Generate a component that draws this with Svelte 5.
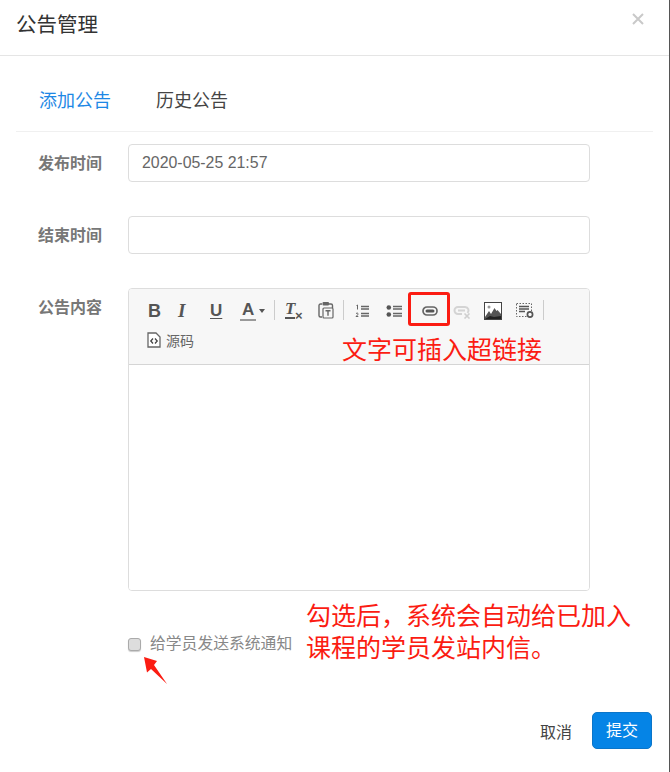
<script>
  let title = '公告管理';
  let tabs = ['添加公告', '历史公告'];
</script>

<div class="modal">
  <header class="head">
    <h4>{title}</h4>
    <svg class="close" width="12" height="12" viewBox="0 0 12 12"><path d="M1 1l10 10M11 1L1 11" stroke="#c9c9c9" stroke-width="2"/></svg>
  </header>

  <div class="body">
    <nav class="tabs">
      {#each tabs as t, i}
        <span class="tab" class:active={i === 0}>{t}</span>
      {/each}
    </nav>

    <div class="row first">
      <span class="label">发布时间</span>
      <div class="input">2020-05-25 21:57</div>
    </div>
    <div class="row second">
      <span class="label">结束时间</span>
      <div class="input"></div>
    </div>
    <div class="row third">
      <span class="label">公告内容</span>
      <div class="editor">
        <div class="toolbar">
          <div class="line one">
            <span class="ic b">B</span>
            <span class="ic i">I</span>
            <span class="ic u">U</span>
            <span class="ic color"><span class="a">A</span><span class="caret"></span></span>
            <span class="sep s1"></span>
            <span class="ic clear"><span class="tx">T</span><span class="x">×</span></span>
            <svg class="ic paste" width="16" height="18" viewBox="0 0 16 18">
              <path d="M4 3H2.500A1.500 1.500 0 0 0 1 4.500v10A1.500 1.500 0 0 0 2.500 16H4" fill="none" stroke="#666" stroke-width="1.400"/>
              <path d="M11 3h2a1.500 1.500 0 0 1 1.500 1.500V7" fill="none" stroke="#666" stroke-width="1.400"/>
              <rect x="4.500" y="1" width="6.500" height="3.500" rx="1" fill="#666"/>
              <rect x="5" y="7" width="10" height="10" rx="1" fill="#f7f7f7" stroke="#666" stroke-width="1.200"/>
              <path d="M7.500 9.800h5M10 9.800v5" stroke="#666" stroke-width="1.400"/>
            </svg>
            <span class="sep s2"></span>
            <svg class="ic ol" width="14" height="14" viewBox="0 0 14 14">
              <path d="M1.500 1.500l1-.5v4.500M1 9.500q1.500-1 2 0t-2 3h2.300" fill="none" stroke="#666" stroke-width="1"/>
              <path d="M6 2.500h8M6 5h8M6 9.500h8M6 12h8" stroke="#666" stroke-width="1.500"/>
            </svg>
            <svg class="ic ul" width="16" height="14" viewBox="0 0 16 14">
              <circle cx="2.800" cy="3.500" r="2.300" fill="#555"/><circle cx="2.800" cy="10.500" r="2.300" fill="#555"/>
              <path d="M7 2.500h9M7 5h9M7 9.500h9M7 12h9" stroke="#666" stroke-width="1.400"/>
            </svg>
            <svg class="ic link" width="16" height="10" viewBox="0 0 16 10">
              <rect x="1" y="1" width="14" height="8" rx="4" fill="none" stroke="#666" stroke-width="1.700"/>
              <rect x="3.500" y="3.500" width="9" height="3" rx="1.500" fill="#555"/>
            </svg>
            <svg class="ic unlink" width="18" height="14" viewBox="0 0 18 14">
              <path d="M9 9H5a3.500 3.500 0 0 1 0-7h7a3.500 3.500 0 0 1 2.500 6" fill="none" stroke="#d4d4d4" stroke-width="2"/>
              <path d="M5 5.500h7" stroke="#d4d4d4" stroke-width="2"/>
              <path d="M11.500 8.500l5 5M16.500 8.500l-5 5" stroke="#cfcfcf" stroke-width="1.600"/>
            </svg>
            <svg class="ic image" width="18" height="18" viewBox="0 0 18 18">
              <rect x=".5" y=".5" width="17" height="17" fill="#fff" stroke="#444"/>
              <path d="M1 15l4-6 2 3 3.500-6 2 3 1-1L17 12v5H1z" fill="#555"/>
              <path d="M1 17l5-3 4 1 7-1v3z" fill="#222"/>
              <circle cx="5" cy="5" r="1.500" fill="#999"/>
            </svg>
            <svg class="ic media" width="19" height="18" viewBox="0 0 19 18">
              <rect x=".5" y="1.500" width="15" height="13" fill="none" stroke="#666" stroke-dasharray="1.500 1.500"/>
              <path d="M3 4.500h10M3 7h10M3 9.500h6" stroke="#555" stroke-width="1.500"/>
              <circle cx="14" cy="12.500" r="2.600" fill="#f7f7f7" stroke="#555" stroke-width="1.700"/>
            </svg>
            <span class="sep s3"></span>
          </div>
          <div class="line two">
            <svg width="14" height="16" viewBox="0 0 14 16">
              <path d="M1 1h8l4 4v10H1z" fill="#fff" stroke="#666" stroke-width="1.300"/>
              <path d="M6 6.500L3.800 9 6 11.500M8 6.500L10.200 9 8 11.500" fill="none" stroke="#444" stroke-width="1.300"/>
            </svg>
            <span class="src">源码</span>
          </div>
        </div>
        <div class="content"></div>
      </div>
    </div>

    <label class="notify">
      <span class="box"></span>
      <span>给学员发送系统通知</span>
    </label>
  </div>

  <footer class="foot">
    <span class="cancel">取消</span>
    <span class="submit">提交</span>
  </footer>

  <!-- red notes drawn over the screenshot -->
  <div class="mark"></div>
  <div class="note n1">文字可插入超链接</div>
  <div class="note n2">勾选后，系统会自动给已加入<br />课程的学员发站内信。</div>
  <svg class="arrow" width="26" height="36" viewBox="0 0 26 36">
    <path d="M1 3l13 4-3 4 13 19L8 15l-4 3.500z" fill="#fb1c12"/>
  </svg>
</div>

<style>
  :global(body) { margin: 0; background: #fff; }

  .modal {
    position: relative;
    width: 670px; height: 772px;
    box-sizing: border-box;
    border-right: 1px solid #555;
    font-family: "Liberation Sans", "Noto Sans CJK SC", sans-serif;
    font-size: 14px; color: #555;
    overflow: hidden;
    display: flex; flex-direction: column;
  }

  .head {
    height: 56px; box-sizing: border-box;
    border-bottom: 1px solid #e5e5e5;
    padding: 0 25px 0 17px;
    display: flex; align-items: center; justify-content: space-between;
    flex: none;
  }
  .head h4 { margin: 0 0 6px -1px; font-size: 20.500px; font-weight: 400; color: #333; line-height: 26px; }
  .close { margin-bottom: 17px; }

  .body { flex: 1; padding: 0 16px; }

  .tabs {
    display: flex; gap: 45px;
    height: 76px; box-sizing: border-box;
    padding: 33px 0 0 23px;
    border-bottom: 1px solid #f0f0f0;
    font-size: 18px; color: #444; line-height: 24px;
  }
  .tab { width: 72px; white-space: nowrap; }
  .tab.active { color: #1e88e5; }

  .row { display: flex; align-items: flex-start; }
  .row.first { margin-top: 12px; }
  .row.second { margin-top: 34px; }
  .row.third { margin-top: 34px; }

  .label {
    width: 112px; height: 38px; flex: none; box-sizing: border-box;
    padding-left: 22px;
    font-size: 16px; font-weight: 700; color: #777; line-height: 40px;
  }

  .input {
    width: 462px; height: 38px; box-sizing: border-box;
    border: 1px solid #ddd; border-radius: 4px;
    padding: 1px 13px 0; line-height: 34px;
    font-size: 15.900px; color: #666;
  }

  .editor {
    width: 462px; height: 303px; box-sizing: border-box;
    border: 1px solid #ddd; border-radius: 4px;
    display: flex; flex-direction: column;
    overflow: hidden;
  }

  .toolbar {
    height: 76px; flex: none; box-sizing: border-box;
    background: #f7f7f7; border-bottom: 1px solid #d5d5d5;
    position: relative;
  }
  .line { position: absolute; left: 0; right: 0; }
  .line.one { top: 1px; height: 44px; }
  .ic { position: absolute; }
  .b, .i, .u {
    font-weight: 700; font-size: 17px; color: #555; line-height: 20px; top: 11px;
  }
  .b { left: 19px; font-size: 18px; }
  .i { left: 49px; font-style: italic; font-family: "Liberation Serif", serif; font-size: 19px; }
  .u { left: 81px; text-decoration: underline; text-underline-offset: 2px; }
  .color { left: 111px; top: 11px; display: flex; align-items: center; gap: 3px; }
  .a { font-weight: 700; font-size: 17px; line-height: 18px; color: #555; border-bottom: 2px solid #999; padding: 0 2px; display: block; height: 18px; }
  .caret { width: 0; height: 0; border: 3.500px solid transparent; border-top: 4px solid #555; border-bottom: 0; }
  .sep { position: absolute; top: 10px; width: 1px; height: 20px; background: #ccc; }
  .s1 { left: 145px; }
  .s2 { left: 214px; }
  .s3 { left: 414px; }
  .clear { left: 156px; top: 11px; }
  .tx { font-family: "Liberation Serif", serif; font-style: italic; font-weight: 700; font-size: 17px; color: #555; line-height: 16px; display: block; border-bottom: 2px solid #555; width: 10px; height: 16px; text-align: center; }
  .x { position: absolute; left: 10px; top: 9px; font-size: 13px; font-weight: 700; line-height: 12px; color: #555; }
  .paste { left: 189px; top: 11px; }
  .ol { left: 226px; top: 14px; }
  .ul { left: 257px; top: 14px; }
  .link { left: 293px; top: 16px; }
  .unlink { left: 324px; top: 15px; }
  .image { left: 355px; top: 12px; }
  .media { left: 387px; top: 12px; }

  .line.two {
    top: 39px; height: 24px; padding-left: 18px;
    display: flex; align-items: center; gap: 5px;
  }
  .src { font-size: 14px; color: #666; }

  .content { flex: 1; background: #fff; }

  .notify {
    display: flex; align-items: center; gap: 9px;
    margin: 43px 0 0 112px;
    font-size: 15.800px; color: #888; line-height: 20px;
  }
  .box {
    width: 11px; height: 11px; flex: none;
    border: 1px solid #aaa; border-radius: 3px;
    background: #ddd;
    box-shadow: 0 1px 1px rgba(0,0,0,0.2);
  }

  .foot {
    flex: none; height: 65px; box-sizing: border-box;
    padding: 0 17px 18px 0;
    display: flex; align-items: center; justify-content: flex-end; gap: 20px;
  }
  .cancel { font-size: 16px; color: #444; }
  .submit {
    width: 60px; height: 37px; box-sizing: border-box;
    background: #0584e6; border: 1px solid #0a75c9; border-radius: 5px;
    color: #fff; font-size: 16px; line-height: 35px; text-align: center;
  }

  .mark {
    position: absolute; left: 408px; top: 292px;
    width: 42px; height: 34px; box-sizing: border-box;
    border: 3px solid #fb1c12; border-radius: 3px;
  }
  .note { position: absolute; color: #fb1c12; font-size: 25px; white-space: nowrap; }
  .n1 { left: 342px; top: 334px; line-height: 32px; }
  .n2 { left: 306px; top: 600px; line-height: 32px; }
  .arrow { position: absolute; left: 143px; top: 654px; }
</style>
